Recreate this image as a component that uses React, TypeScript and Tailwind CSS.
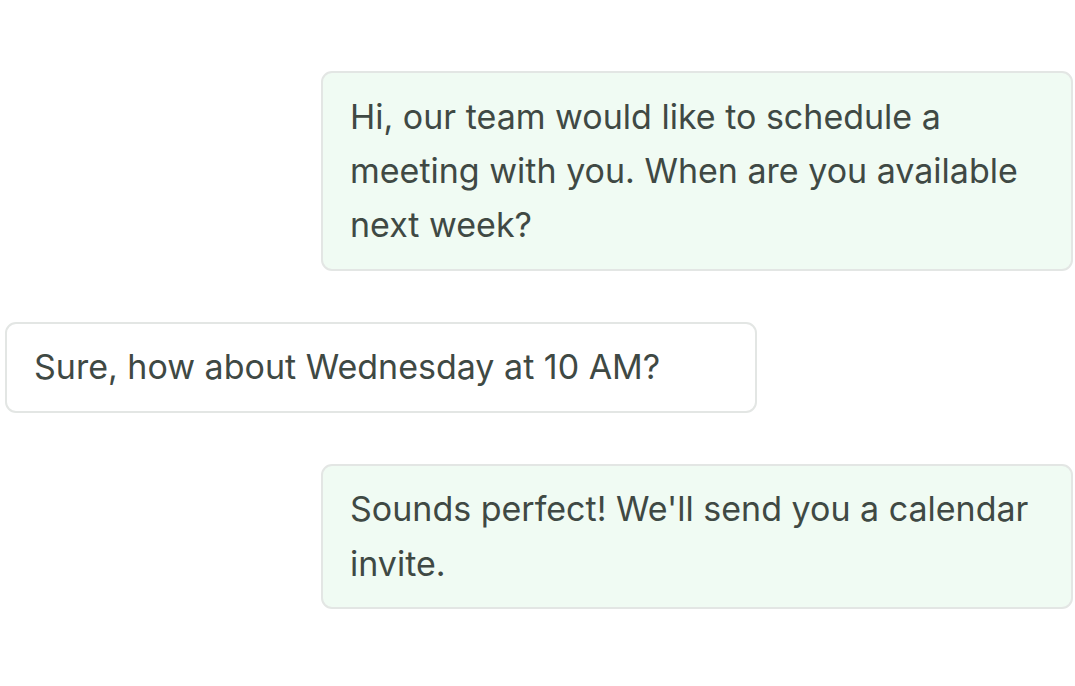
import React from 'react';

const messages = [
  { from: 'me', text: 'Hi, our team would like to schedule a meeting with you. When are you available next week?' },
  { from: 'them', text: 'Sure, how about Wednesday at 10 AM?' },
  { from: 'me', text: "Sounds perfect! We'll send you a calendar invite." },
];

export default function App() {
  return (
    <div className="min-h-screen bg-white font-['Inter',sans-serif]">
      <div className="flex flex-col gap-[50.5px] pt-[71px]">
        {messages.map((m, i) => (
          <div
            key={i}
            className={`w-[752px] rounded-[11px] border-2 border-[#e3e6e4] px-[27px] py-[16.5px] text-[34px] leading-[54.4px] text-[#3f4944] ${
              m.from === 'me' ? 'self-end mr-[2px] bg-[#f0fbf3]' : 'self-start ml-[5px] bg-white'
            }`}
          >
            {m.text}
          </div>
        ))}
      </div>
    </div>
  );
}
